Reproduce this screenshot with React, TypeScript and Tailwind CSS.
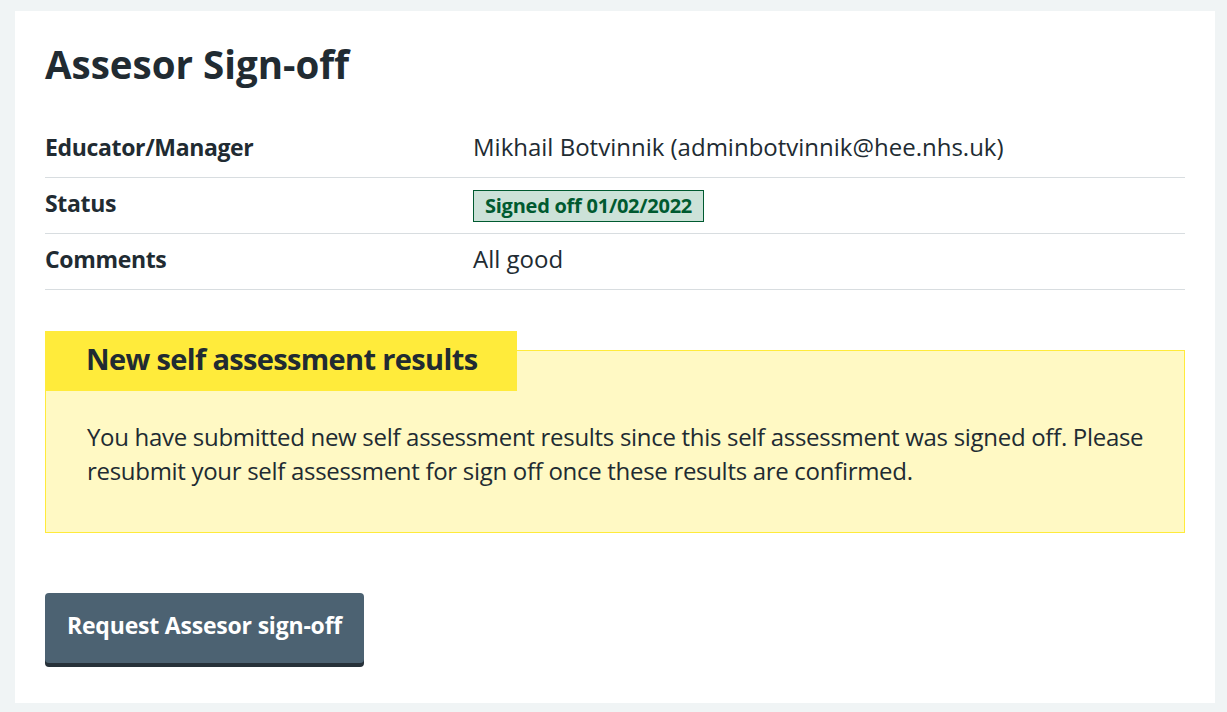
import React from 'react';

interface SummaryRowProps {
  label: string;
  children: React.ReactNode;
}

function SummaryRow({ label, children }: SummaryRowProps) {
  return (
    <div className="flex border-b border-[#d8dde0] pt-[9px] pb-[14px]">
      <div className="w-[428px] shrink-0 text-[23px] font-bold tracking-[-0.35px]">{label}</div>
      <div className="flex-1">{children}</div>
    </div>
  );
}

export default function App() {
  return (
    <div
      className="min-h-screen bg-[#f0f4f5] pt-[11px] pb-[9px] text-[#212b32]"
      style={{ fontFamily: '"Open Sans", "Noto Sans", sans-serif' }}
    >
      <div className="ml-[15px] w-[1200px] bg-white px-[30px] pt-[29px] pb-[40px]">
        <h1 className="mb-[34px] text-[38.5px] leading-[48px] font-bold">Assesor Sign-off</h1>

        <div className="text-[24px] leading-[32px]">
          <SummaryRow label="Educator/Manager">Mikhail Botvinnik (adminbotvinnik@hee.nhs.uk)</SummaryRow>
          <SummaryRow label="Status">
            <span className="relative top-[3px] inline-block border border-[#005a30] bg-[#cce2d8] px-[11px] py-[5px] align-top text-[20px] leading-[20px] font-bold tracking-[-0.25px] text-[#005a30]">
              Signed off 01/02/2022
            </span>
          </SummaryRow>
          <SummaryRow label="Comments">All good</SummaryRow>
        </div>

        {/* Warning callout */}
        <div className="mt-[60px] border border-[#ffeb3b] bg-[#fff9c4] pb-[45px]">
          <h3 className="-mt-[20px] -ml-px inline-block bg-[#ffeb3b] pt-[8px] pr-[40px] pb-[12px] pl-[41px] text-[29px] leading-[40px] font-bold tracking-[-0.65px]">
            New self assessment results
          </h3>
          <p className="mt-[29px] pr-[30px] pl-[41px] text-[24px] leading-[33.5px] tracking-[-0.3px]">
            You have submitted new self assessment results since this self assessment was signed off. Please
            resubmit your self assessment for sign off once these results are confirmed.
          </p>
        </div>

        <button
          type="button"
          className="mt-[60px] block rounded-[4px] bg-[#4c6272] px-[22px] pt-[16px] pb-[22px] text-[23px] leading-[32px] font-bold tracking-[-0.2px] text-white shadow-[0_4px_0_#263139]"
        >
          Request Assesor sign-off
        </button>
      </div>
    </div>
  );
}
